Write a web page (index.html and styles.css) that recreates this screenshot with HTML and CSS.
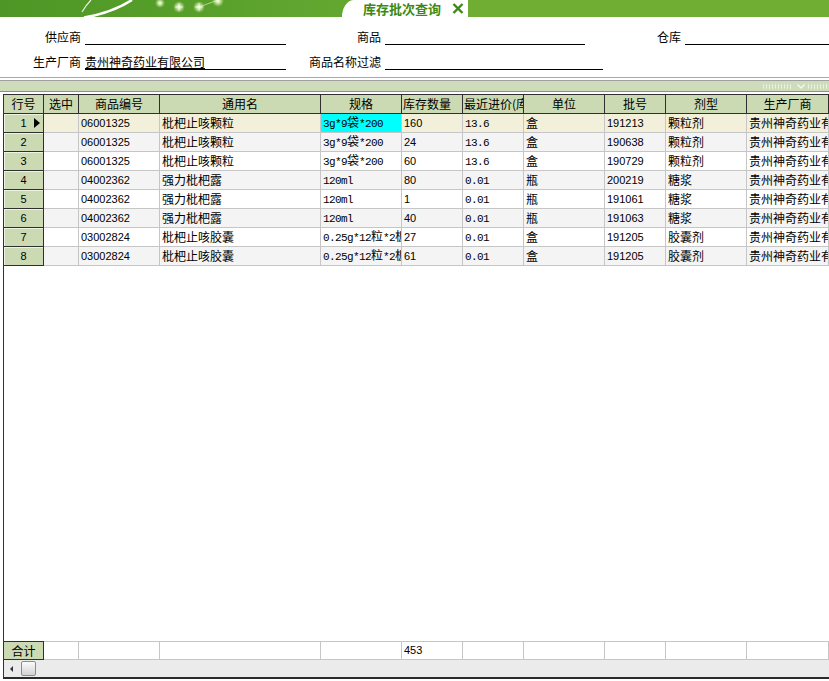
FILE: index.html
```html
<!DOCTYPE html>
<html lang="zh-CN">
<head>
<meta charset="utf-8">
<title>库存批次查询</title>
<link rel="stylesheet" href="styles.css">
</head>
<body>
<div class="banner">
  <svg class="banner-deco" width="342" height="17" viewBox="0 0 342 17">
    <defs>
      <radialGradient id="spk">
        <stop offset="0" stop-color="#ffffff" stop-opacity="1"/>
        <stop offset="0.35" stop-color="#e8f8c8" stop-opacity="0.8"/>
        <stop offset="1" stop-color="#c8f090" stop-opacity="0"/>
      </radialGradient>
    </defs>
    <path d="M82 12 Q86 5 91 0" stroke="#ffffff" stroke-width="1.2" fill="none" opacity="0.85"/>
    <path d="M84 17.5 Q112 13 132 0" stroke="#ffffff" stroke-width="2.6" fill="none"/>
    <path d="M199 7 L221 -1" stroke="#e6f7c8" stroke-width="1" opacity="0.6"/>
    <circle cx="160" cy="3" r="5" fill="url(#spk)"/>
    <circle cx="179" cy="7" r="6" fill="url(#spk)"/>
    <circle cx="199" cy="7" r="6" fill="url(#spk)"/>
    <circle cx="218" cy="1" r="6" fill="url(#spk)"/>
    <path d="M175 7 H183 M179 3 V11 M195 7 H203 M199 3 V11" stroke="#ffffff" stroke-width="0.8" opacity="0.8"/>
  </svg>
  <div class="tab">
    <span class="tab-title">库存批次查询</span>
    <svg class="tab-x" width="12" height="11" viewBox="0 0 12 11"><path d="M1.5 1 L10.5 10 M10.5 1 L1.5 10" stroke="#3b8a13" stroke-width="2.4" fill="none"/></svg>
  </div>
  <div class="banner-rest"></div>
</div>

<div class="form">
  <div class="frow">
    <span class="lbl l1">供应商</span><span class="fld f1"></span>
    <span class="lbl l2">商品</span><span class="fld f2"></span>
    <span class="lbl l3">仓库</span><span class="fld f3"></span>
  </div>
  <div class="frow">
    <span class="lbl l1">生产厂商</span><span class="fld f1"><span class="val">贵州神奇药业有限公司</span></span>
    <span class="lbl l2">商品名称过滤</span><span class="fld f4"></span>
  </div>
</div>

<div class="sep">
  <div class="band">
    <div class="grip">
      <span class="dots d1"></span>
      <svg class="chev" width="8" height="5" viewBox="0 0 8 5"><path d="M0.5 0.5 L4 4 L7.5 0.5" stroke="#f4f8ee" stroke-width="1.4" fill="none"/></svg>
      <span class="dots d2"></span>
    </div>
  </div>
</div>

<div class="grid">
  <table class="tbl">
    <colgroup>
      <col class="c1"><col class="c2"><col class="c3"><col class="c4"><col class="c5"><col class="c6"><col class="c7"><col class="c8"><col class="c9"><col class="c10"><col class="c11">
    </colgroup>
    <thead>
      <tr>
        <th>行号</th><th>选中</th><th>商品编号</th><th>通用名</th><th>规格</th><th class="left">库存数量</th><th class="left">最近进价(库</th><th>单位</th><th>批号</th><th>剂型</th><th>生产厂商</th>
      </tr>
    </thead>
    <tbody>
      <tr class="cur">
        <td class="rh">1<span class="ptr"></span></td><td></td><td class="n">06001325</td><td>枇杷止咳颗粒</td><td class="m hl">3g*9<span class="cj">袋</span>*200</td><td class="n">160</td><td class="m">13.6</td><td>盒</td><td class="n">191213</td><td>颗粒剂</td><td>贵州神奇药业有限公司</td>
      </tr>
      <tr class="alt">
        <td class="rh">2</td><td></td><td class="n">06001325</td><td>枇杷止咳颗粒</td><td class="m">3g*9<span class="cj">袋</span>*200</td><td class="n">24</td><td class="m">13.6</td><td>盒</td><td class="n">190638</td><td>颗粒剂</td><td>贵州神奇药业有限公司</td>
      </tr>
      <tr>
        <td class="rh">3</td><td></td><td class="n">06001325</td><td>枇杷止咳颗粒</td><td class="m">3g*9<span class="cj">袋</span>*200</td><td class="n">60</td><td class="m">13.6</td><td>盒</td><td class="n">190729</td><td>颗粒剂</td><td>贵州神奇药业有限公司</td>
      </tr>
      <tr class="alt">
        <td class="rh">4</td><td></td><td class="n">04002362</td><td>强力枇杷露</td><td class="m">120ml</td><td class="n">80</td><td class="m">0.01</td><td>瓶</td><td class="n">200219</td><td>糖浆</td><td>贵州神奇药业有限公司</td>
      </tr>
      <tr>
        <td class="rh">5</td><td></td><td class="n">04002362</td><td>强力枇杷露</td><td class="m">120ml</td><td class="n">1</td><td class="m">0.01</td><td>瓶</td><td class="n">191061</td><td>糖浆</td><td>贵州神奇药业有限公司</td>
      </tr>
      <tr class="alt">
        <td class="rh">6</td><td></td><td class="n">04002362</td><td>强力枇杷露</td><td class="m">120ml</td><td class="n">40</td><td class="m">0.01</td><td>瓶</td><td class="n">191063</td><td>糖浆</td><td>贵州神奇药业有限公司</td>
      </tr>
      <tr>
        <td class="rh">7</td><td></td><td class="n">03002824</td><td>枇杷止咳胶囊</td><td class="m">0.25g*12<span class="cj">粒</span>*2<span class="cj">板</span></td><td class="n">27</td><td class="m">0.01</td><td>盒</td><td class="n">191205</td><td>胶囊剂</td><td>贵州神奇药业有限公司</td>
      </tr>
      <tr class="alt">
        <td class="rh">8</td><td></td><td class="n">03002824</td><td>枇杷止咳胶囊</td><td class="m">0.25g*12<span class="cj">粒</span>*2<span class="cj">板</span></td><td class="n">61</td><td class="m">0.01</td><td>盒</td><td class="n">191205</td><td>胶囊剂</td><td>贵州神奇药业有限公司</td>
      </tr>
    </tbody>
  </table>

  <div class="spacer"></div>

  <table class="tbl foot">
    <colgroup>
      <col class="c1"><col class="c2"><col class="c3"><col class="c4"><col class="c5"><col class="c6"><col class="c7"><col class="c8"><col class="c9"><col class="c10"><col class="c11">
    </colgroup>
    <tbody>
      <tr>
        <td class="sum">合计</td><td></td><td></td><td></td><td></td><td class="n">453</td><td></td><td></td><td></td><td></td><td></td>
      </tr>
    </tbody>
  </table>

  <div class="hscroll">
    <span class="arrow"></span>
    <span class="thumb"></span>
  </div>
</div>
</body>
</html>
```

FILE: styles.css
```css
* { box-sizing: border-box; }
html, body { margin: 0; padding: 0; background: #ffffff; }
body {
  width: 829px;
  height: 681px;
  overflow: hidden;
  font-family: "Noto Sans CJK SC", "Liberation Sans", sans-serif;
  font-size: 12px;
  color: #000000;
}

/* ---------- banner ---------- */
.banner {
  display: flex;
  height: 17px;
  background: linear-gradient(90deg, #4e9726 0%, #58a02b 25%, #66a932 45%, #6fae34 100%);
}
.banner-deco { flex: 0 0 342px; display: block; }
.tab {
  flex: 0 0 126px;
  height: 17px;
  background: #ffffff;
  border-top-left-radius: 12px 17px;
  display: flex;
  align-items: center;
  padding-left: 21px;
  gap: 11px;
}
.tab-title {
  font-weight: bold;
  font-size: 13px;
  line-height: 17px;
  color: #3b8a13;
  white-space: nowrap;
}
.tab-x { display: block; }
.banner-rest { flex: 1; background: #6fae33; }

/* ---------- filter form ---------- */
.form {
  padding: 12px 0 7px;
  display: flex;
  flex-direction: column;
  gap: 9px;
}
.frow { display: flex; height: 16px; }
.lbl {
  text-align: right;
  padding-right: 4px;
  line-height: 16px;
  white-space: nowrap;
}
.l1 { width: 85px; }
.l2 { width: 99px; }
.l3 { width: 100px; }
.fld {
  height: 16px;
  border-bottom: 1px solid #000000;
  line-height: 15px;
  white-space: nowrap;
}
.f1 { width: 201px; }
.f2 { width: 200px; }
.f3 { flex: 1; }
.f4 { width: 218px; }
.val { text-decoration: underline; }

/* ---------- separator band ---------- */
.sep {
  border-top: 1px solid #a9a9a9;
  padding-top: 2px;
}
.band {
  height: 12px;
  border-top: 1px solid #a0a0a0;
  border-bottom: 1px solid #8e8e8e;
  background: #cfdcbb;
  display: flex;
  justify-content: flex-end;
  align-items: center;
}
.grip { display: flex; align-items: center; }
.dots {
  display: block;
  height: 5px;
  background-image: radial-gradient(circle, #f6f9f0 0.7px, transparent 1px);
  background-size: 3px 2.5px;
}
.d1 { width: 30px; }
.d2 { width: 22px; }
.chev { display: block; margin: 0 2px 0 5px; }

/* ---------- grid ---------- */
.grid {
  margin: 2px 0 0 3px;
  height: 585px;
  border-left: 1px solid #333333;
  border-bottom: 2px solid #2a2a2a;
  display: flex;
  flex-direction: column;
  overflow: hidden;
}
.tbl {
  border-collapse: separate;
  border-spacing: 0;
  table-layout: fixed;
  width: 825px;
  flex: none;
}
.c1 { width: 40px; }
.c2 { width: 35px; }
.c3 { width: 81px; }
.c4 { width: 161px; }
.c5 { width: 81px; }
.c6 { width: 61px; }
.c7 { width: 61px; }
.c8 { width: 81px; }
.c9 { width: 61px; }
.c10 { width: 81px; }
.c11 { width: 82px; }

.tbl th, .tbl td {
  padding: 0 0 0 2px;
  border-right: 1px solid #c6c6c6;
  border-bottom: 1px solid #c6c6c6;
  white-space: nowrap;
  overflow: hidden;
  text-overflow: clip;
  line-height: 18px;
  height: 19px;
  vertical-align: top;
  font-weight: normal;
  text-align: left;
}
.tbl th {
  background: #cbdab3;
  text-align: center;
  border-top: 1px solid #2f2f2f;
  border-right: 1px solid #2f2f2f;
  border-bottom: 1px solid #2f2f2f;
  padding: 0;
  height: 20px;
}
.tbl th.left { text-align: left; padding-left: 1px; }

.tbl tr.alt td { background: #f4f4f4; }
.tbl tr.cur td { background: #f2f0da; }
.tbl tr.cur td.hl { background: #00ffff; }

.tbl td.rh, .tbl tr.cur td.rh, .tbl tr.alt td.rh {
  background: #cbdab3;
  text-align: center;
  padding: 0;
  border-right: 1px solid #2f2f2f;
  border-bottom: 1px solid #2f2f2f;
  box-shadow: inset 1px 1px 0 #eef3e6;
  font-family: "Liberation Sans", sans-serif;
  font-size: 11px;
  position: relative;
}
.ptr {
  position: absolute;
  right: 3px;
  top: 4px;
  width: 0;
  height: 0;
  border-left: 6px solid #000000;
  border-top: 5px solid transparent;
  border-bottom: 5px solid transparent;
}
.n { font-family: "Liberation Sans", sans-serif; font-size: 11px; }
.tbl td.m {
  font-family: "Liberation Mono", monospace;
  font-size: 11px;
  letter-spacing: -0.6px;
  padding-top: 2px;
  line-height: 16px;
}
.cj { font-family: "Noto Sans CJK SC", sans-serif; font-size: 12px; letter-spacing: 0; line-height: 10px; }

.spacer { flex: 1; }

.foot td {
  border-top: 1px solid #c6c6c6;
  line-height: 17px;
}
.foot td.sum {
  background: #cbdab3;
  text-align: center;
  padding: 0;
  border: 1px solid #2f2f2f;
  border-left: 0;
}

.hscroll {
  height: 17px;
  flex: none;
  background: #ebebeb;
  display: flex;
  align-items: center;
}
.arrow {
  display: block;
  width: 0;
  height: 0;
  margin-left: 6px;
  border-right: 3px solid #333333;
  border-top: 3px solid transparent;
  border-bottom: 3px solid transparent;
}
.thumb {
  display: block;
  width: 15px;
  height: 15px;
  margin-left: 8px;
  border: 1px solid #8c8c8c;
  border-radius: 2px;
  background: linear-gradient(#fbfbfb, #d2d2d2);
}
```
